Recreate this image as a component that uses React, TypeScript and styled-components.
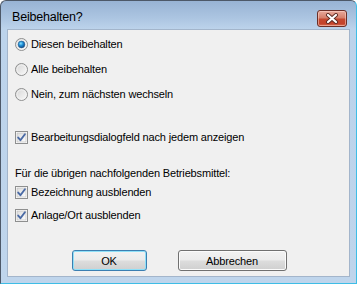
import React, { useState } from 'react';
import styled, { createGlobalStyle } from 'styled-components';

const GlobalStyle = createGlobalStyle`
  html, body {
    margin: 0;
    padding: 0;
    background: #ffffff;
  }
  * {
    box-sizing: border-box;
  }
`;

const Window = styled.div`
  width: 357px;
  height: 284px;
  display: flex;
  flex-direction: column;
  border: 1px solid;
  border-color: #4d5868 #3ebde6 #3ebde6 #4d5868;
  border-radius: 6px 6px 0 0;
  background: linear-gradient(
    180deg,
    #98b3d4 0px,
    #adc6e2 18px,
    #bcd3eb 28px,
    #bfd5ec 100%
  );
  font-family: 'Liberation Sans', Arial, sans-serif;
`;

const TitleBar = styled.div`
  height: 28px;
  display: flex;
  align-items: flex-start;
  justify-content: space-between;
  padding: 9px 9px 0 11px;
`;

const Title = styled.span`
  font-family: 'Liberation Sans', Arial, sans-serif;
  font-size: 12.5px;
  line-height: 15px;
  color: #000;
  letter-spacing: -0.2px;
`;

const CloseButton = styled.button`
  width: 30px;
  height: 17px;
  padding: 0;
  display: flex;
  align-items: center;
  justify-content: center;
  border: 1px solid #6b2f27;
  border-radius: 3px;
  background: linear-gradient(
    180deg,
    #e8aa9c 0%,
    #d6806c 45%,
    #c4482f 55%,
    #c4432b 85%,
    #d97458 100%
  );
  box-shadow: inset 0 0 0 1px rgba(255, 220, 210, 0.5);
`;

const Client = styled.div`
  flex: 1;
  margin: 0 6px 6px;
  border: 1px solid #a3b5cb;
  background: #f0f0f0;
  display: flex;
  flex-direction: column;
  padding: 2px 7px 5px;
  font-size: 11px;
  letter-spacing: -0.15px;
  color: #000;
`;

const Row = styled.label<{ $h: number; $mt?: number }>`
  display: flex;
  align-items: center;
  gap: 3px;
  height: ${(p) => p.$h}px;
  margin-top: ${(p) => p.$mt ?? 0}px;
  line-height: 13px;
  white-space: nowrap;
`;

const Caption = styled.div<{ $mt: number }>`
  height: 16px;
  margin-top: ${(p) => p.$mt}px;
  display: flex;
  align-items: center;
  white-space: nowrap;
`;

const ButtonBar = styled.div`
  margin-top: auto;
  display: flex;
  justify-content: center;
  gap: 31px;
  padding-left: 1px;
`;

const PushButton = styled.button<{ $w: number; $default?: boolean }>`
  width: ${(p) => p.$w}px;
  height: 21px;
  padding: 0;
  font-family: 'Liberation Sans', Arial, sans-serif;
  font-size: 11px;
  letter-spacing: -0.15px;
  color: #000;
  border: 1px solid ${(p) => (p.$default ? '#3c7fb1' : '#707070')};
  border-radius: 3px;
  background: linear-gradient(
    180deg,
    #f2f2f2 0%,
    #ebebeb 48%,
    #dddddd 52%,
    #cfcfcf 100%
  );
  box-shadow: ${(p) =>
    p.$default ? 'inset 0 0 0 1px #8fe0f8' : 'inset 0 0 0 1px #fbfbfb'};
`;

const RadioIcon = ({ checked }: { checked: boolean }) => (
  <svg width="13" height="13" viewBox="0 0 13 13">
    <defs>
      <linearGradient id="rbg" x1="0" y1="0" x2="1" y2="1">
        <stop offset="0" stopColor="#d4d4d4" />
        <stop offset="1" stopColor="#fbfbfb" />
      </linearGradient>
      <radialGradient id="rdot" cx="0.4" cy="0.35" r="0.7">
        <stop offset="0" stopColor="#8be3ff" />
        <stop offset="0.45" stopColor="#1d8ed6" />
        <stop offset="1" stopColor="#0d3f7a" />
      </radialGradient>
    </defs>
    <circle cx="6.5" cy="6.5" r="6" fill="url(#rbg)" stroke="#8e8f8f" />
    <circle cx="6.5" cy="6.5" r="4.6" fill="none" stroke="#f4f4f4" strokeWidth="0.8" />
    {checked && <circle cx="6.5" cy="6.5" r="3.4" fill="url(#rdot)" stroke="#2b5a8a" strokeWidth="0.5" />}
  </svg>
);

const CheckIcon = ({ checked }: { checked: boolean }) => (
  <svg width="13" height="13" viewBox="0 0 13 13">
    <defs>
      <linearGradient id="cbg" x1="0" y1="0" x2="1" y2="1">
        <stop offset="0" stopColor="#dcdcdc" />
        <stop offset="1" stopColor="#fdfdfd" />
      </linearGradient>
    </defs>
    <rect x="0.5" y="0.5" width="12" height="12" fill="#fff" stroke="#8e8f8f" />
    <rect x="2" y="2" width="9" height="9" fill="url(#cbg)" stroke="#b8b8b8" strokeWidth="0.6" />
    {checked && (
      <path
        d="M3.2 6.6 L5.4 9.2 L9.9 3.2"
        fill="none"
        stroke="#4a6aa5"
        strokeWidth="1.9"
        strokeLinecap="round"
        strokeLinejoin="round"
      />
    )}
  </svg>
);

export default function App() {
  const [choice, setChoice] = useState(0);
  const [checks, setChecks] = useState([true, true, true]);
  const toggle = (i: number) =>
    setChecks((c) => c.map((v, j) => (j === i ? !v : v)));

  const radios = ['Diesen beibehalten', 'Alle beibehalten', 'Nein, zum nächsten wechseln'];

  return (
    <>
      <GlobalStyle />
      <Window>
        <TitleBar>
          <Title>Beibehalten?</Title>
          <CloseButton aria-label="Schließen">
            <svg width="14" height="11" viewBox="0 0 14 11">
              <path d="M3 2 L11 9 M11 2 L3 9" stroke="#5b2a22" strokeWidth="4" strokeLinecap="round" />
              <path d="M3 2 L11 9 M11 2 L3 9" stroke="#ffffff" strokeWidth="2.2" strokeLinecap="round" />
            </svg>
          </CloseButton>
        </TitleBar>
        <Client>
          {radios.map((r, i) => (
            <Row key={r} $h={25} onClick={() => setChoice(i)}>
              <RadioIcon checked={choice === i} />
              {r}
            </Row>
          ))}
          <Row $h={25} $mt={18} onClick={() => toggle(0)}>
            <CheckIcon checked={checks[0]} />
            Bearbeitungsdialogfeld nach jedem anzeigen
          </Row>
          <Caption $mt={15}>Für die übrigen nachfolgenden Betriebsmittel:</Caption>
          <Row $h={23} onClick={() => toggle(1)}>
            <CheckIcon checked={checks[1]} />
            Bezeichnung ausblenden
          </Row>
          <Row $h={23} onClick={() => toggle(2)}>
            <CheckIcon checked={checks[2]} />
            Anlage/Ort ausblenden
          </Row>
          <ButtonBar>
            <PushButton $w={75} $default>OK</PushButton>
            <PushButton $w={109}>Abbrechen</PushButton>
          </ButtonBar>
        </Client>
      </Window>
    </>
  );
}
